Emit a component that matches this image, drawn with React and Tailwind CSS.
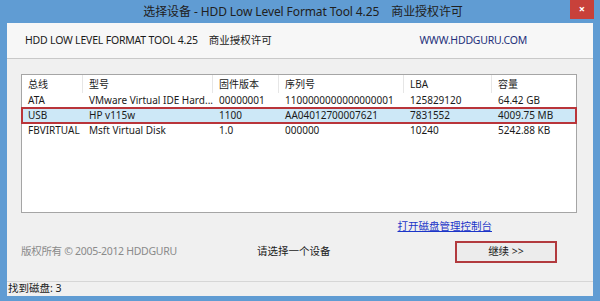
const rows = [
  { bus: 'ATA', model: 'VMware Virtual IDE Hard...', fw: '00000001', sn: '1100000000000000001', lba: '125829120', size: '64.42 GB' },
  { bus: 'USB', model: 'HP v115w', fw: '1100', sn: 'AA04012700007621', lba: '7831552', size: '4009.75 MB', selected: true },
  { bus: 'FBVIRTUAL', model: 'Msft Virtual Disk', fw: '1.0', sn: '000000', lba: '10240', size: '5242.88 KB' },
];

const cols = [
  { key: 'bus', label: '总线', w: 'w-[61px]' },
  { key: 'model', label: '型号', w: 'w-[130px]' },
  { key: 'fw', label: '固件版本', w: 'w-[66px]' },
  { key: 'sn', label: '序列号', w: 'w-[125px]' },
  { key: 'lba', label: 'LBA', w: 'w-[88px]' },
  { key: 'size', label: '容量', w: 'flex-1' },
];

export default function App() {
  return (
    <div className="w-[600px] h-[301px] bg-[#609cd3] flex flex-col text-[#1a1a1a] font-['Noto_Sans','Noto_Sans_CJK_SC',sans-serif] overflow-hidden">
      {/* title bar */}
      <div className="h-[23px] relative flex items-center justify-center shrink-0">
        <span className="text-[12px] text-[#202020] pl-[6px] tracking-[-0.1px]">选择设备 - HDD Low Level Format Tool 4.25&nbsp;&nbsp;&nbsp;&nbsp;商业授权许可</span>
        <div className="absolute right-[6px] top-0 w-[24px] h-[19px] bg-[#c8413a] flex items-center justify-center text-white text-[11px] font-bold">×</div>
      </div>

      <div className="flex-1 mx-[7px] mb-[5px] bg-[#f0f0f0] flex flex-col">
        {/* header */}
        <div className="h-[36px] bg-[#f7f7f7] border-b border-[#c9c9c9] flex items-center px-[18px] text-[10.5px] shrink-0">
          <span className="tracking-[-0.2px]">HDD LOW LEVEL FORMAT TOOL 4.25</span>
          <span className="ml-[11px]">商业授权许可</span>
          <span className="ml-auto mr-[48px] text-[#24307a] tracking-[-0.2px]">WWW.HDDGURU.COM</span>
        </div>

        {/* device list */}
        <div className="mt-[15px] ml-[14px] mr-[16px] h-[139px] bg-white border border-[#a5a5a5] text-[10px] shrink-0">
          <div className="h-[18px] flex">
            {cols.map((c, i) => (
              <div key={c.key} className={`${c.w} flex items-center pl-[6px] ${i < cols.length - 1 ? 'border-r border-[#e6e6e6]' : ''}`}>{c.label}</div>
            ))}
          </div>
          {rows.map((r) => (
            <div key={r.bus} className={`h-[15px] flex ${r.selected ? 'bg-[#cde8f7] outline-2 outline-[#b9353a] -outline-offset-1' : ''}`}>
              {cols.map((c) => (
                <div key={c.key} className={`${c.w} flex items-center pl-[6px] whitespace-nowrap overflow-hidden`}>{r[c.key]}</div>
              ))}
            </div>
          ))}
        </div>

        {/* bottom */}
        <div className="flex-1 flex flex-col px-[14px]">
          <div className="flex justify-end mt-[6px] mr-[87px]">
            <span className="text-[10.5px] text-[#1b35c8] underline">打开磁盘管理控制台</span>
          </div>
          <div className="flex items-center mt-[6px] text-[10.5px]">
            <span className="text-[#8a8a8a] w-[236px] tracking-[-0.3px]">版权所有 © 2005-2012 HDDGURU</span>
            <span>请选择一个设备</span>
            <div className="ml-auto mr-[22px] w-[102px] h-[22px] border-2 border-[#b23a3e] bg-[#ececec] flex items-center justify-center">
              <span>继续 &gt;&gt;</span>
            </div>
          </div>
        </div>

        {/* status bar */}
        <div className="h-[15px] border-t border-[#d6d6d6] flex items-center px-[1px] text-[10.5px] shrink-0">
          找到磁盘: 3
        </div>
      </div>
    </div>
  );
}
